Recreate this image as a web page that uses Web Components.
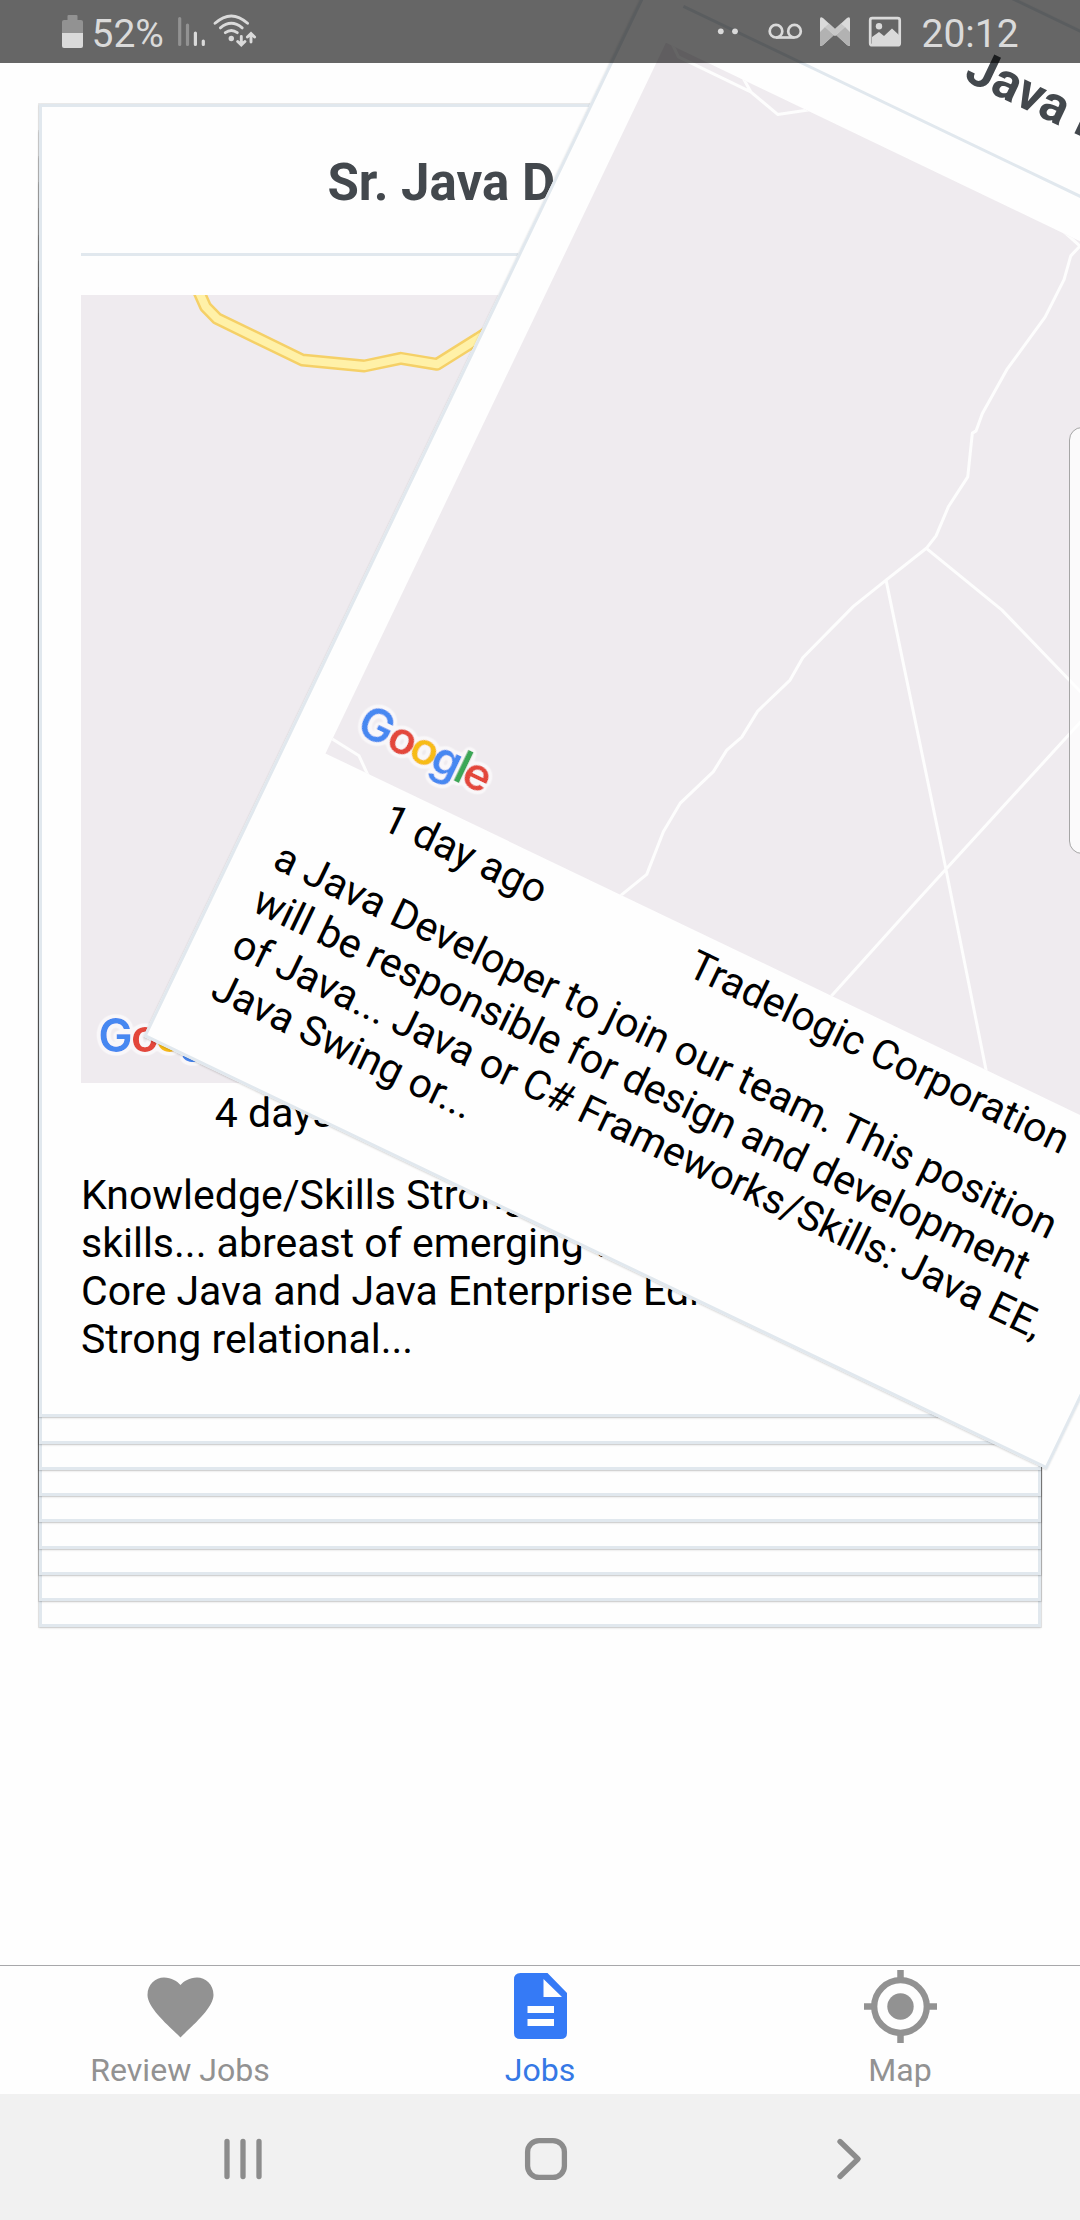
<!DOCTYPE html>
<html lang="en">
<head>
<meta charset="utf-8">
<title>Jobs</title>
<style>
html, body { margin: 0; padding: 0; background: #fefefe; }
body { font-family: Roboto, "Liberation Sans", sans-serif; color: #000; }
</style>
</head>
<body>
<jobs-app>
  <status-bar slot="status"></status-bar>
  <card-deck slot="deck">
    <job-card style="--drop:210px"></job-card>
    <job-card style="--drop:184px"></job-card>
    <job-card style="--drop:158px"></job-card>
    <job-card style="--drop:132px"></job-card>
    <job-card style="--drop:105px"></job-card>
    <job-card style="--drop:79px"></job-card>
    <job-card style="--drop:53px"></job-card>
    <job-card style="--drop:27px"></job-card>
    <job-card>
      <span slot="title">Sr. Java Developer</span>
      <road-map slot="map" kind="highway"></road-map>
      <span slot="age">4 days ago</span>
      <span slot="company" style="min-width:185px"></span>
      <span slot="text">Knowledge/Skills Strong<br>skills... abreast of emerging t<br>Core Java and Java Enterprise Edi<br>Strong relational...</span>
    </job-card>
    <job-card class="swiped">
      <span slot="title">Java Developer</span>
      <road-map slot="map" kind="streets"></road-map>
      <span slot="age">1 day ago</span>
      <span slot="company">Tradelogic Corporation</span>
      <span slot="text">a Java Developer to join our team. This position<br>will be responsible for design and development<br>of Java... Java or C# Frameworks/Skills: Java EE,<br>Java Swing or...</span>
    </job-card>
  </card-deck>
  <tab-bar slot="tabs">
    <tab-item icon="heart">Review Jobs</tab-item>
    <tab-item icon="doc" active>Jobs</tab-item>
    <tab-item icon="target">Map</tab-item>
  </tab-bar>
  <system-nav slot="nav"></system-nav>
  <edge-panel slot="edge"></edge-panel>
</jobs-app>
<script>
const define = (name, html) => customElements.define(name, class extends HTMLElement {
  constructor() {
    super();
    const t = document.createElement('template');
    t.innerHTML = typeof html === 'function' ? html(this) : html;
    this.attachShadow({ mode: 'open' }).append(t.content.cloneNode(true));
  }
});

define('jobs-app', `
<style>
:host { display: flex; flex-direction: column; position: relative; width: 1080px; height: 2220px; overflow: hidden; background: #fefefe; }
main { flex: 1; min-height: 0; }
footer { position: relative; z-index: 1; display: flex; flex-direction: column; }
</style>
<slot name="status"></slot>
<main><slot name="deck"></slot></main>
<footer><slot name="tabs"></slot><slot name="nav"></slot></footer>
<slot name="edge"></slot>`);

define('status-bar', `
<style>
:host { position: absolute; z-index: 2; top: 0; left: 0; display: flex; justify-content: space-between; box-sizing: border-box; width: 1080px; height: 63px; background: rgba(0,0,0,.6); color: #dadada; }
div { display: flex; align-items: flex-start; }
svg { display: block; flex: none; }
span { font-size: 39px; line-height: 46px; padding-top: 11px; white-space: nowrap; box-sizing: border-box; }
.pct { width: 89px; padding-left: 8.500px; }
.clock { width: 169px; padding-left: 10.500px; }
</style>
<div>
  <svg width="83" height="63"><path fill="#929292" d="M67.500 20V16q0-1 1-1h8q1 0 1 1v4h3.500q2 0 2 2v11H62V22q0-2 2-2z"/><path fill="#dadada" d="M62 33h21v13q0 2-2 2H64q-2 0-2-2z"/></svg>
  <span class="pct">52%</span>
  <svg width="90" height="63" viewBox="172 0 90 63" fill="none" stroke-linecap="round">
    <g stroke-width="3.200"><path stroke="#929292" d="M179.700 18.500V44.500M187.500 25V44.500"/><path stroke="#dadada" d="M195.400 33V44.500M203.300 41V44.500"/></g>
    <g stroke="#dadada" stroke-width="2.900"><path d="M215 23.300Q231.300 8.500 247.600 23.300M220.400 27.900Q231.300 18.800 242.200 27.900M225.300 32.700Q231.300 28.200 237.300 32.700"/><path d="M241.300 36.500V44M237.700 41.500L241.300 45L244.900 41.500M251 42V34.500M247.400 37L251 33.500L254.600 37"/></g>
    <circle cx="231.300" cy="38.500" r="2.700" fill="#dadada"/>
  </svg>
</div>
<div>
  <svg width="200" height="63" viewBox="711 0 200 63">
    <g fill="#dadada"><circle cx="720.800" cy="31.300" r="2.900"/><circle cx="735" cy="31.300" r="2.900"/></g>
    <g fill="none" stroke="#dadada" stroke-width="2.700"><circle cx="776" cy="31.200" r="6.300"/><circle cx="794.500" cy="31.200" r="6.300"/><path d="M776 37.500H794.500"/></g>
    <path fill="#dadada" d="M820 19q0-3 3-1l12 11 12-11q3-2 3 1V45q0 2-3 0L835 34 823 45q-3 2-3 0z"/>
    <path fill="#b2b2b2" d="M820 45V32l5-5 10 9 10-9 5 5V45q0 2-3 0L835 34 823 45q-3 2-3 0z"/>
    <path fill="#c7c7c7" d="M825 27l4-3.500 6 5.500 6-5.500 4 3.500-10 9z"/>
    <rect x="870.200" y="18.200" width="29.500" height="27" rx="2" fill="none" stroke="#dadada" stroke-width="2.700"/>
    <circle cx="879" cy="26.300" r="3.200" fill="#dadada"/>
    <path fill="#dadada" d="M872 37l7-5 5 4 8-7.500 7 6.500V45H872z"/>
  </svg>
  <span class="clock">20:12</span>
</div>`);

define('card-deck', `
<style>
:host { display: grid; justify-items: start; align-items: start; padding: 104px 0 0 39px; }
::slotted(*) { grid-area: 1 / 1; margin-top: var(--drop, 0px); }
::slotted(.swiped) { transform-origin: 0 0; transform: translate(671.600px, -251.600px) rotate(25.600deg); }
</style><slot></slot>`);

define('job-card', `
<style>
:host { display: flex; flex-direction: column; box-sizing: border-box; width: 1002px; height: 1313px; padding: 39px; border: 3px solid #e1e8ee; background: #fefefe; box-shadow: 0 0 0 1px rgba(0,0,0,.07), 0 1px 2px rgba(0,0,0,.16); white-space: nowrap; }
:host(.swiped) { box-shadow: 0 1px 2px rgba(0,0,0,.16); }
h2 { margin: 0; box-sizing: border-box; height: 110px; padding-top: 9px; border-bottom: 3px solid #e1e8ee; text-align: center; font-size: 51px; line-height: 56px; font-weight: 700; color: #43484d; }
.map { margin-top: 39px; height: 788px; }
.meta { display: flex; justify-content: space-around; margin-top: 6px; height: 48px; font-size: 41px; line-height: 49px; }
p { margin: 34px 0 0; font-size: 41px; line-height: 48px; }
</style>
<h2><slot name="title"></slot></h2>
<div class="map"><slot name="map"></slot></div>
<div class="meta"><slot name="age"></slot><slot name="company"></slot></div>
<p><slot name="text"></slot></p>`);

const roads = {
  highway: `<g transform="translate(-81 -295)" fill="none" stroke-linejoin="round">
    <path stroke="#f5d067" stroke-width="13" d="M190 270L199 292 205.500 306.700 217 318.500 302.300 360 364.300 366 400.700 358.300 437 364.300 478.400 338.300 530 304"/>
    <path stroke="#fff1a8" stroke-width="8" d="M190 270L199 292 205.500 306.700 217 318.500 302.300 360 364.300 366 400.700 358.300 437 364.300 478.400 338.300 530 304"/></g>`,
  streets: `<g transform="rotate(-25.600) translate(-665.900 -42.700)" fill="none" stroke="#fdfdfd" stroke-width="3" stroke-linejoin="round">
    <path d="M1100 232L1080 246 1070.700 255.800 1064 279.500 1045 317 1006.700 369.600 982.300 413.400 976 430.800 972.300 433 967.700 476.800 948.300 506.700 936 535.700 926.300 548.200 886 580 853.300 606.300 802.700 657.600 790 680 757.700 711 741.700 737 726.700 750 713.300 771.500 680 803.300 663.300 831.700 646.700 874.300 615 900"/>
    <path d="M926.300 548.200L1001.700 609.800 1080 691 1180 790M886 580L946 869.600 990 1090M1180 637L1080 722.300 917.700 900 825 1003"/>
    <path d="M668 36L673.600 46.700 678.400 56.700 750.700 91.700 777.600 114.300 815 109M742 76L750.700 91.700M320 731L332.300 739 359 755.700 372 784M1062 230L1080 246 1110 262"/></g>`
};

define('road-map', el => `
<style>
:host { display: block; width: 918px; height: 788px; background: #efebef; }
svg { display: block; }
text { font: 600 46px Inter, sans-serif; text-anchor: middle; }
</style>
<svg width="918" height="788">
  <defs><filter id="halo" x="-20%" y="-30%" width="140%" height="160%">
    <feGaussianBlur in="SourceAlpha" stdDeviation="2.800"/>
    <feComponentTransfer result="a"><feFuncA type="linear" slope="14" intercept="-.35"/></feComponentTransfer>
    <feFlood flood-color="#fff" flood-opacity=".62"/><feComposite in2="a" operator="in"/>
    <feMerge><feMergeNode/><feMergeNode in="SourceGraphic"/></feMerge>
  </filter></defs>
  ${roads[el.getAttribute('kind')]}
  <text filter="url(#halo)" y="756.500"><tspan x="34.500" fill="#4688f1">G</tspan><tspan x="64" fill="#e3463a">o</tspan><tspan x="88.500" fill="#f7bc13">o</tspan><tspan x="113" fill="#4688f1">g</tspan><tspan x="130.300" fill="#3aa757">l</tspan><tspan x="146.500" fill="#e3463a">e</tspan></text>
</svg>`);

define('tab-bar', `
<style>:host { display: flex; box-sizing: border-box; height: 129px; border-top: 1px solid #a7a7aa; background: #fefefe; } ::slotted(*) { flex: 1; }</style><slot></slot>`);

const icons = {
  heart: '<path d="M40 71.500C29 60.500 7 42 7 29 7 18 15 11.500 23.500 11.500 31 11.500 37 15.500 40 19 43 15.500 49 11.500 56.500 11.500 65 11.500 73 18 73 29 73 42 51 60.500 40 71.500Z"/>',
  doc: '<path fill-rule="evenodd" d="M20 7H47L66.500 27V67Q66.500 73 60 73H20Q13.500 73 13.500 67V13.500Q13.500 7 20 7ZM43 13V31H61.500ZM27 40V47H53.500V40ZM27 53V60H53.500V53Z"/>',
  target: '<path fill="none" stroke="currentColor" stroke-width="6.500" d="M40 4V13M40 67V77M3.500 40.500H13M67 40.500H76.500"/><circle cx="40" cy="40.500" r="26.300" fill="none" stroke="currentColor" stroke-width="6.300"/><circle cx="40" cy="40.500" r="13.200"/>'
};
define('tab-item', el => `
<style>
:host { display: flex; flex-direction: column; align-items: center; color: #929292; font-size: 32.100px; line-height: 38px; white-space: nowrap; }
:host([active]) { color: #3578e5; }
:host([active]) svg { color: #357af6; }
svg { display: block; fill: currentColor; margin-bottom: 5px; }
</style>
<svg width="80" height="80"><g transform="translate(.5 0)">${icons[el.getAttribute('icon')]}</g></svg><span><slot></slot></span>`);

define('system-nav', `
<style>
:host { display: flex; align-items: center; box-sizing: border-box; height: 126px; padding: 4px 80px 0 92px; background: #f1f1f1; }
div { flex: 1; display: flex; justify-content: center; }
svg { fill: none; stroke: #8c8c8c; stroke-width: 5.300; stroke-linecap: round; stroke-linejoin: round; }
</style>
<div><svg width="44" height="44"><path d="M6 4.500V39.500M22 4.500V39.500M38 4.500V39.500"/></svg></div>
<div><svg width="44" height="44"><rect x="3.600" y="3.600" width="36.800" height="36.800" rx="11.500"/></svg></div>
<div><svg width="44" height="44"><path d="M13 4.500L31 22 13 39.500"/></svg></div>`);

define('edge-panel', `
<style>:host { position: absolute; z-index: 2; left: 1069px; top: 427px; width: 30px; height: 425px; border: 1.500px solid #a6a6a6; border-radius: 13px; background: rgba(255,255,255,.75); }</style>`);
</script>
</body>
</html>
